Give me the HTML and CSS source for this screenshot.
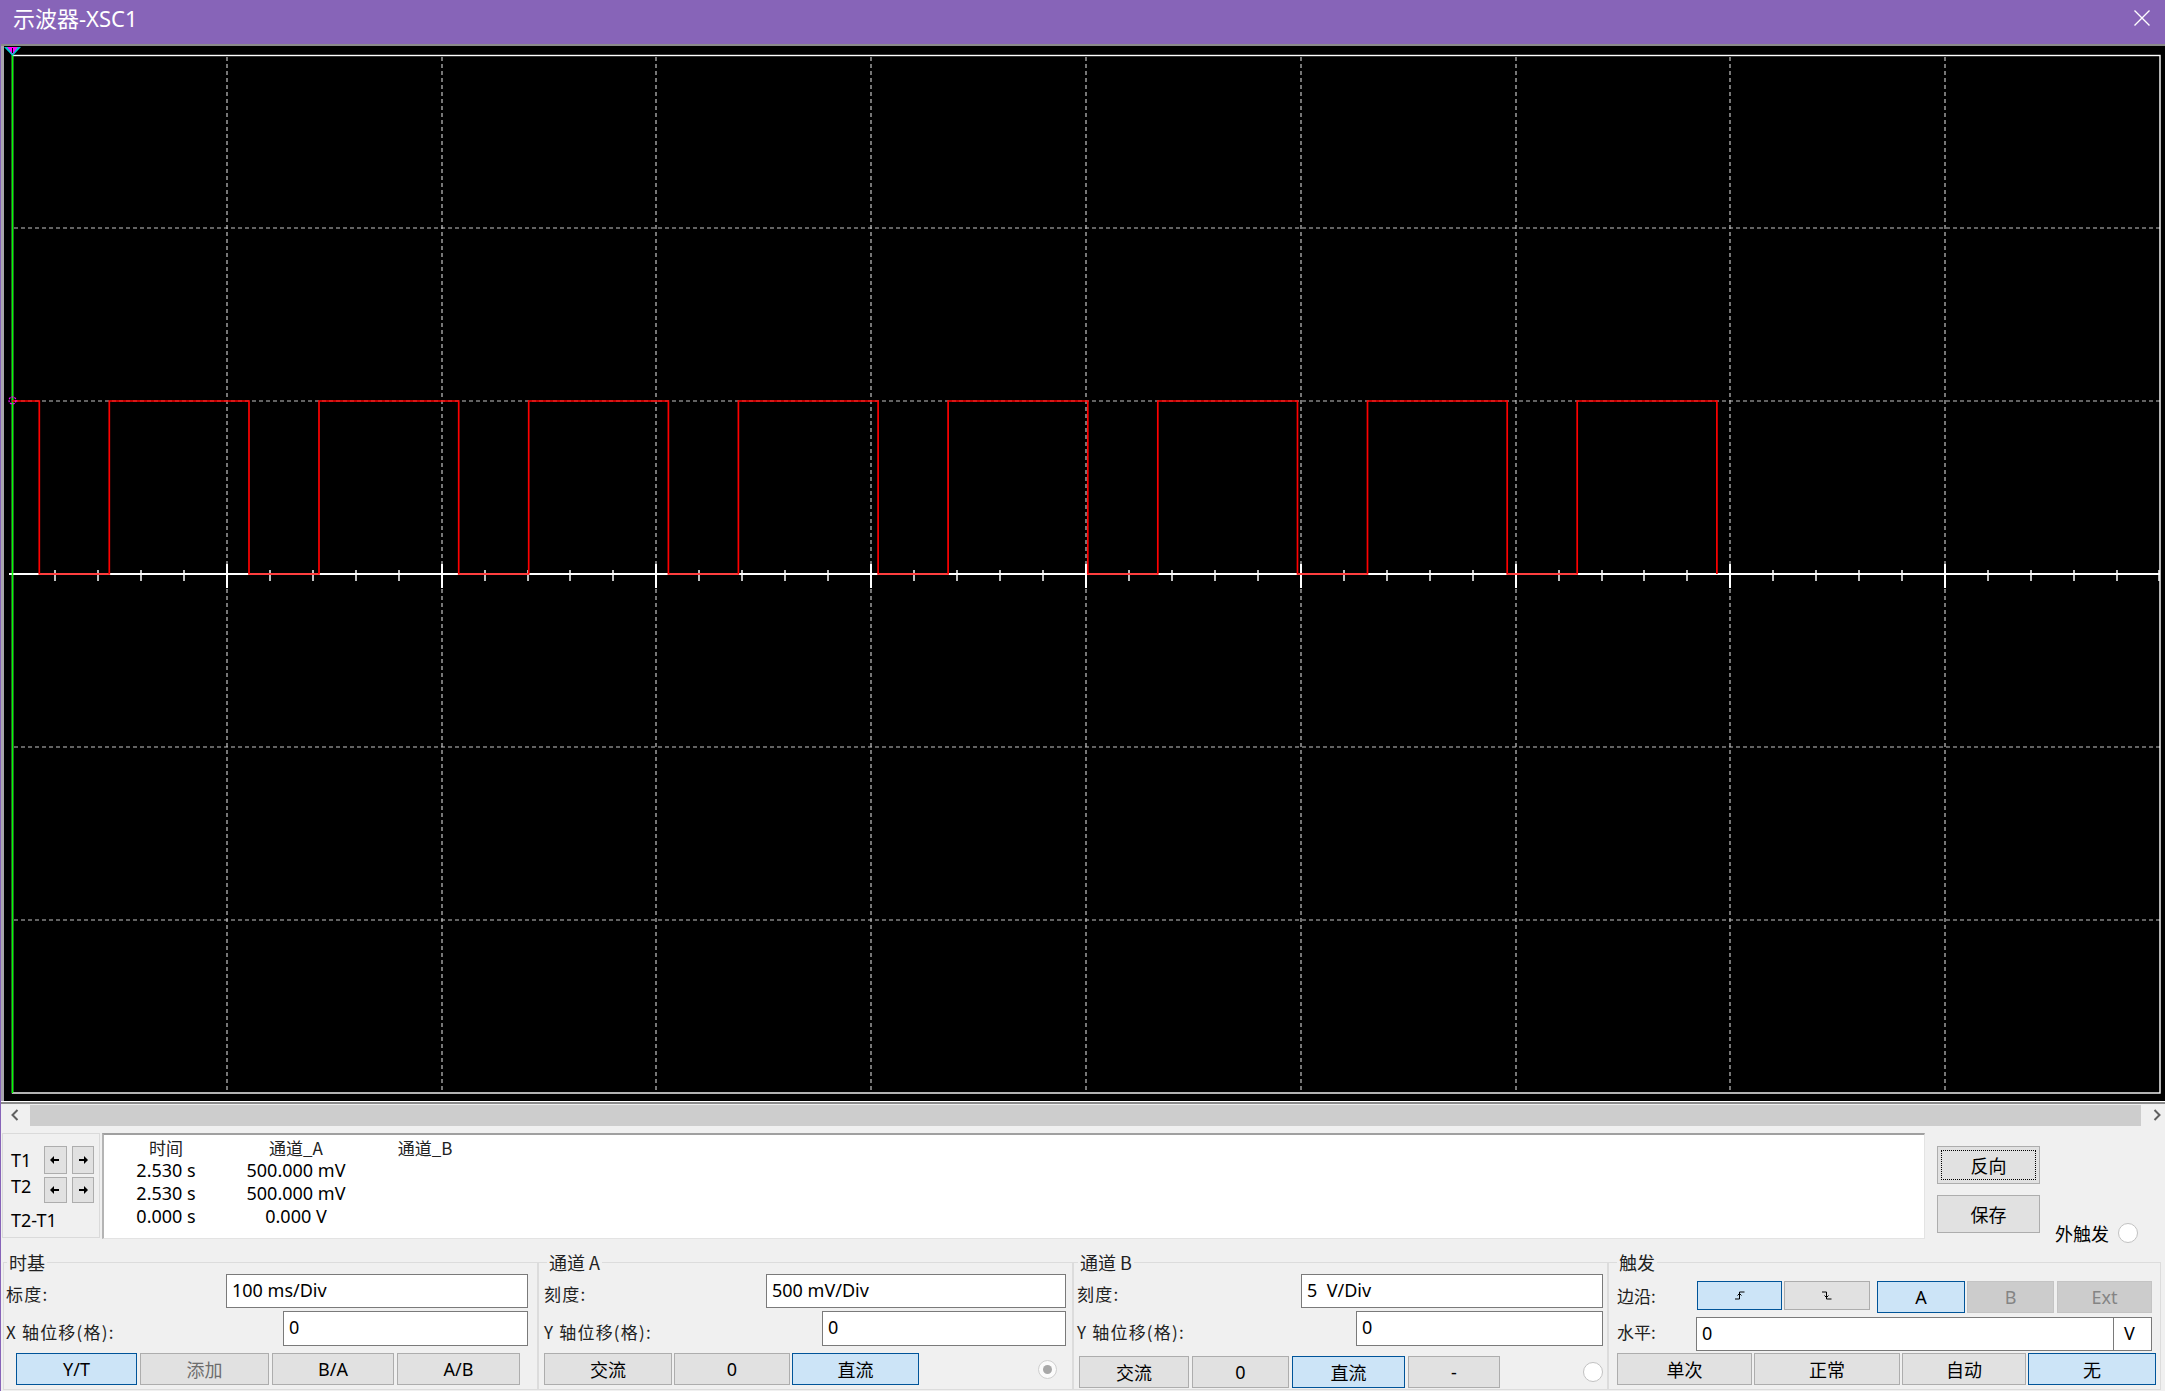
FILE: index.html
```html
<!DOCTYPE html>
<html lang="zh-CN">
<head>
<meta charset="utf-8">
<title>示波器-XSC1</title>
<link rel="stylesheet" href="styles.css">
</head>
<body>
<div class="window">
  <header class="titlebar">
    <span class="title">示波器-XSC1</span>
    <svg class="close" width="16" height="16" viewBox="0 0 16 16"><path d="M0.5 0.5L15.5 15.5M15.5 0.5L0.5 15.5" stroke="#fff" stroke-width="1.4" fill="none"/></svg>
  </header>
  <div class="main">
    <svg class="scope" width="2164" height="1060" viewBox="1 44 2164 1060">
      <rect x="0" y="44" width="2165" height="2" fill="#8a8a8a"/>
      <rect x="0" y="46" width="2165" height="1055" fill="#000"/>
      <rect x="1" y="46" width="3" height="1055" fill="#a9a6ad"/>
      <rect x="0" y="1101" width="2165" height="1" fill="#ffffff"/>
      <rect x="0" y="1102" width="2165" height="2" fill="#8a8a8a"/>
      <g stroke="#c4c4c4" stroke-width="1.2" stroke-dasharray="4 3" fill="none">
        <path d="M227 57V1093M442 57V1093M656 57V1093M871 57V1093M1086 57V1093M1301 57V1093M1516 57V1093M1730 57V1093M1945 57V1093"/>
        <path d="M14 228H2160M14 401H2160M14 747H2160M14 920H2160"/>
      </g>
      <rect x="12.5" y="55.5" width="2147.5" height="1037.5" fill="none" stroke="#fff" stroke-width="1.4"/>
      <path d="M9 574H2160" stroke="#fff" stroke-width="2" fill="none"/>
      <path d="M55 570V581M98 570V581M141 570V581M184 570V581M270 570V581M313 570V581M356 570V581M399 570V581M485 570V581M528 570V581M570 570V581M613 570V581M699 570V581M742 570V581M785 570V581M828 570V581M914 570V581M957 570V581M1000 570V581M1043 570V581M1129 570V581M1172 570V581M1215 570V581M1258 570V581M1344 570V581M1387 570V581M1430 570V581M1473 570V581M1559 570V581M1602 570V581M1644 570V581M1687 570V581M1773 570V581M1816 570V581M1859 570V581M1902 570V581M1988 570V581M2031 570V581M2074 570V581M2117 570V581M2159 570V581" stroke="#fff" stroke-width="1.5" fill="none"/>
      <path d="M227 564V588M442 564V588M656 564V588M871 564V588M1086 564V588M1301 564V588M1516 564V588M1730 564V588M1945 564V588" stroke="#fff" stroke-width="2" fill="none"/>
      <path d="M12.5 55V1093" stroke="#00ff00" stroke-width="1.5" fill="none"/>
      <path d="M12 401H39.3V574H109.3V401H249V574H319V401H458.7V574H528.7V401H668.4V574H738.4V401H878.1V574H948.1V401H1087.8V574H1157.8V401H1297.5V574H1367.5V401H1507.2V574H1577.2V401H1716.9V574" stroke="#ff0000" stroke-width="1.7" fill="none"/>
      <circle cx="12.5" cy="400.5" r="3.5" fill="none" stroke="#ff00ff" stroke-width="1.2" stroke-dasharray="2 1"/>
      <polygon points="4,47 21,47 12.5,56" fill="#00c8d0"/>
      <polygon points="7,47 18,47 12.5,54" fill="#ff00ff"/>
      <path d="M12.5 48V53" stroke="#000" stroke-width="1"/>
    </svg>

    <div class="hscroll">
      <div class="sb-btn left"><svg width="8" height="12" viewBox="0 0 8 12"><path d="M6.5 1L1.5 6L6.5 11" stroke="#606060" stroke-width="2" fill="none"/></svg></div>
      <div class="sb-track"></div>
      <div class="sb-btn right"><svg width="8" height="12" viewBox="0 0 8 12"><path d="M1.5 1L6.5 6L1.5 11" stroke="#606060" stroke-width="2" fill="none"/></svg></div>
    </div>

    <div class="readout">
      <div class="cursors">
        <div class="cur-row">
          <span class="cur-label">T1</span>
          <span class="arrow-btn"><svg width="10" height="8" viewBox="0 0 10 8"><path d="M0 4L4 0V3H9V5H4V8Z" fill="#000"/></svg></span>
          <span class="arrow-btn"><svg width="10" height="8" viewBox="0 0 10 8"><path d="M10 4L6 0V3H1V5H6V8Z" fill="#000"/></svg></span>
        </div>
        <div class="cur-row r2">
          <span class="cur-label">T2</span>
          <span class="arrow-btn small"><svg width="10" height="8" viewBox="0 0 10 8"><path d="M0 4L4 0V3H9V5H4V8Z" fill="#000"/></svg></span>
          <span class="arrow-btn small"><svg width="10" height="8" viewBox="0 0 10 8"><path d="M10 4L6 0V3H1V5H6V8Z" fill="#000"/></svg></span>
        </div>
        <div class="cur-diff">T2-T1</div>
      </div>
      <div class="data">
        <div class="data-grid">
          <span class="zh head">时间</span><span class="zh head">通道_A</span><span class="zh head">通道_B</span>
          <span>2.530 s</span><span>500.000 mV</span><span></span>
          <span>2.530 s</span><span>500.000 mV</span><span></span>
          <span>0.000 s</span><span>0.000 V</span><span></span>
        </div>
      </div>
      <div class="side">
        <div class="side-btns">
          <div class="btn zh big focus"><span class="focus-ring">反向</span></div>
          <div class="btn zh big">保存</div>
        </div>
        <div class="ext"><span class="zh">外触发</span><span class="radio"></span></div>
      </div>
    </div>

    <div class="controls">
      <fieldset class="grp g1">
        <legend class="zh">时基</legend>
        <div class="row r1"><span class="lbl zh">标度:</span><div class="field w302">100 ms/Div</div></div>
        <div class="row r2"><span class="lbl zh">X 轴位移(格):</span><div class="field w245 h35">0</div></div>
        <div class="btnrow b1">
          <div class="btn on" style="width:121px">Y/T</div>
          <div class="btn zh dim" style="width:129px">添加</div>
          <div class="btn" style="width:122px">B/A</div>
          <div class="btn" style="width:123px">A/B</div>
        </div>
      </fieldset>

      <fieldset class="grp g2">
        <legend class="zh">通道 A</legend>
        <div class="row r1"><span class="lbl zh">刻度:</span><div class="field w300">500 mV/Div</div></div>
        <div class="row r2"><span class="lbl zh">Y 轴位移(格):</span><div class="field w244 h35">0</div></div>
        <div class="btnrow b2">
          <div class="btn zh" style="width:128px">交流</div>
          <div class="btn" style="width:116px">0</div>
          <div class="btn zh on" style="width:127px">直流</div>
          <span class="radio checked"></span>
        </div>
      </fieldset>

      <fieldset class="grp g3">
        <legend class="zh">通道 B</legend>
        <div class="row r1"><span class="lbl zh">刻度:</span><div class="field w302">5&nbsp; V/Div</div></div>
        <div class="row r2"><span class="lbl zh">Y 轴位移(格):</span><div class="field w247 h35">0</div></div>
        <div class="btnrow b3">
          <div class="btn zh" style="width:110px">交流</div>
          <div class="btn" style="width:97px">0</div>
          <div class="btn zh on" style="width:113px">直流</div>
          <div class="btn" style="width:92px">-</div>
          <span class="radio"></span>
        </div>
      </fieldset>

      <fieldset class="grp g4">
        <legend class="zh">触发</legend>
        <div class="trow t1">
          <span class="tlbl zh">边沿:</span>
          <div class="btn on edge" style="width:85px"><svg width="10" height="9" viewBox="0 0 10 9"><path d="M0 8H4.5V1H9.5" stroke="#000" stroke-width="1" fill="none"/><path d="M2.5 4.5L4.5 2.5L6.5 4.5" stroke="#000" stroke-width="1" fill="none"/></svg></div>
          <div class="btn edge" style="width:86px"><svg width="10" height="9" viewBox="0 0 10 9"><path d="M0 1H4.5V8H9.5" stroke="#000" stroke-width="1" fill="none"/><path d="M2.5 4.5L4.5 6.5L6.5 4.5" stroke="#000" stroke-width="1" fill="none"/></svg></div>
          <div class="btn on src" style="width:88px">A</div>
          <div class="btn dis src" style="width:87px">B</div>
          <div class="btn dis src" style="width:95px">Ext</div>
        </div>
        <div class="trow t2">
          <span class="tlbl zh">水平:</span>
          <div class="field w418 h34">0</div>
          <div class="unit">V</div>
        </div>
        <div class="btnrow b4">
          <div class="btn zh" style="width:135px">单次</div>
          <div class="btn zh" style="width:146px">正常</div>
          <div class="btn zh" style="width:124px">自动</div>
          <div class="btn zh on" style="width:128px">无</div>
        </div>
      </fieldset>
    </div>
  </div>
</div>
</body>
</html>
```

FILE: styles.css
```css
* { box-sizing: border-box; }
html, body { margin: 0; padding: 0; }
body {
  width: 2165px;
  height: 1391px;
  overflow: hidden;
  background: #f0f0f0;
  font-family: "Noto Sans", "Noto Sans CJK SC", sans-serif;
  font-size: 18px;
  color: #000;
}
.zh { font-family: "Noto Sans CJK SC", sans-serif; }

.window { width: 2165px; height: 1391px; display: flex; flex-direction: column; }

.titlebar {
  height: 44px;
  flex: none;
  background: #8764b8;
  display: flex;
  justify-content: space-between;
  align-items: flex-start;
  padding: 3px 15px 0 13px;
}
.title { color: #fff; font-size: 22px; line-height: 30px; }
.close { margin-top: 7px; display: block; }

.main {
  flex: 1;
  border-left: 1px solid #8764b8;
  display: flex;
  flex-direction: column;
  min-height: 0;
}
.scope { display: block; flex: none; }

/* scrollbar */
.hscroll { height: 22px; flex: none; display: flex; }
.sb-btn { display: flex; align-items: center; justify-content: center; }
.sb-btn svg { display: block; }
.sb-btn.left { width: 29px; padding-right: 2px; }
.sb-btn.right { width: 24px; padding-left: 8px; }
.sb-track { flex: 1; margin-top: 1px; height: 21px; background: #cdcdcd; }

/* readout */
.readout { height: 127px; flex: none; display: flex; align-items: flex-start; padding-top: 7px; }
.cursors {
  width: 98px;
  height: 105px;
  margin-left: 1px;
  border: 1px solid #dadada;
  padding: 12px 0 0 8px;
}
.cur-row { display: flex; align-items: center; height: 28px; }
.cur-row.r2 { margin-top: 3px; height: 26px; align-items: flex-start; }
.cur-label { width: 34px; font-size: 18px; line-height: 22px; }
.cur-row.r2 .cur-label { line-height: 16px; margin-top: 1px; }
.arrow-btn {
  width: 23px;
  height: 28px;
  background: #e1e1e1;
  border: 1px solid #adadad;
  display: flex;
  align-items: center;
  justify-content: center;
  margin-right: 5px;
}
.arrow-btn.small { height: 26px; }
.arrow-btn svg { display: block; }
.cur-diff { margin-top: 6px; font-size: 18px; line-height: 22px; }

.data {
  width: 1823px;
  height: 106px;
  margin-left: 2px;
  background: #fff;
  border-top: 2px solid #a0a0a0;
  border-left: 2px solid #b4b4b4;
  border-right: 1px solid #e3e3e3;
  border-bottom: 1px solid #e3e3e3;
  padding-top: 1px;
}
.data-grid {
  display: grid;
  grid-template-columns: 124px 136px 122px;
  grid-auto-rows: 23px;
  font-size: 18px;
  line-height: 23px;
  text-align: center;
}
.data-grid .head { font-size: 17px; color: #222; }

.side { flex: 1; display: flex; padding: 13px 0 0 12px; }
.side-btns { display: flex; flex-direction: column; gap: 11px; }
.btn {
  display: flex;
  align-items: center;
  justify-content: center;
  height: 32px;
  border: 1px solid #adadad;
  background: #e1e1e1;
  font-size: 18px;
  line-height: 20px;
  color: #000;
  flex: none;
}
.btn.big { width: 103px; height: 38px; }
.btn.focus { padding: 3px; }
.focus-ring {
  flex: 1;
  align-self: stretch;
  display: flex;
  align-items: center;
  justify-content: center;
  border: 1px dotted #000;
}
.btn.on { background: #cce4f7; border-color: #005499; }
.btn.dim { color: #6d6d6d; }
.btn.dis { background: #cccccc; border-color: #c4c4c4; color: #848484; }
.ext { display: flex; align-items: center; margin: 77px 0 0 15px; height: 20px; gap: 9px; font-size: 18px; }
.radio {
  width: 20px;
  height: 20px;
  border-radius: 50%;
  border: 1px solid #c2c2c2;
  background: #fff;
  flex: none;
  display: flex;
  align-items: center;
  justify-content: center;
}
.radio.checked { background: #fbfbfb; border-color: #cfcfcf; }
.radio.checked::after {
  content: "";
  width: 9px;
  height: 9px;
  border-radius: 50%;
  background: #a8a8a8;
}

/* controls */
.controls { flex: 1; display: flex; padding-left: 2px; min-height: 0; }
.grp {
  margin: 0;
  padding: 0;
  border: 1px solid #dcdcdc;
  width: 535px;
  height: 137px;
  min-width: 0;
}
.grp legend { padding: 0 2px; font-size: 18px; line-height: 18px; color: #222; }
.g1 legend { margin-left: 1px; }
.g2 legend { margin-left: 3px; }
.g3 legend { margin-left: 1px; }
.g4 legend { margin-left: 0; }
.g1 { padding: 0 9px 0 2px; }
.g2 { padding: 0 6px 0 5px; }
.g3 { padding: 0 4px 0 3px; }
.g4 { width: 553px; padding: 0 0 0 8px; }
.g1 legend, .g2 legend, .g3 legend, .g4 legend { margin-right: 0; }

.row { display: flex; justify-content: space-between; align-items: center; }
.row.r1 { margin-top: 3px; height: 34px; }
.row.r2 { margin-top: 3px; height: 35px; }
.lbl { font-size: 17px; padding-top: 5px; color: #222; letter-spacing: 1.2px; }
.field {
  height: 34px;
  border: 1px solid #7a7a7a;
  background: #fff;
  font-size: 18px;
  line-height: 20px;
  padding: 5px 0 0 5px;
  white-space: pre;
}
.field.h35 { height: 35px; }
.w302 { width: 302px; }
.w300 { width: 300px; }
.w245 { width: 245px; }
.w244 { width: 244px; }
.w247 { width: 247px; }
.w418 { width: 418px; }

.btnrow { display: flex; align-items: center; }
.b1 { margin: 7px 0 0 10px; gap: 3px; }
.b2 { margin-top: 7px; gap: 2px; }
.b2 .radio { width: 19px; height: 19px; margin-left: auto; margin-right: 9px; }
.b3 { margin: 10px 0 0 2px; gap: 3px; }
.b3 .radio { margin-left: auto; margin-right: 0; }
.b4 { margin-top: 2px; gap: 2px; }

.trow { display: flex; align-items: flex-start; }
.t1 { margin-top: 10px; height: 32px; }
.t2 { margin-top: 4px; height: 34px; align-items: stretch; }
.tlbl { width: 79px; font-size: 17px; padding-top: 2px; color: #222; }
.t1 .tlbl { width: 80px; }
.t1 .btn.edge { height: 29px; margin-right: 2px; }
.t1 .btn.edge + .btn.src { margin-left: 5px; }
.t1 .btn.src { height: 32px; margin-right: 2px; }
.t1 .btn.src:last-child { margin-left: 1px; }
.btn svg { display: block; }
.unit {
  width: 39px;
  margin-left: -1px;
  border: 1px solid #7a7a7a;
  background: #fff;
  font-size: 18px;
  line-height: 20px;
  padding: 5px 0 0 10px;
}
```
